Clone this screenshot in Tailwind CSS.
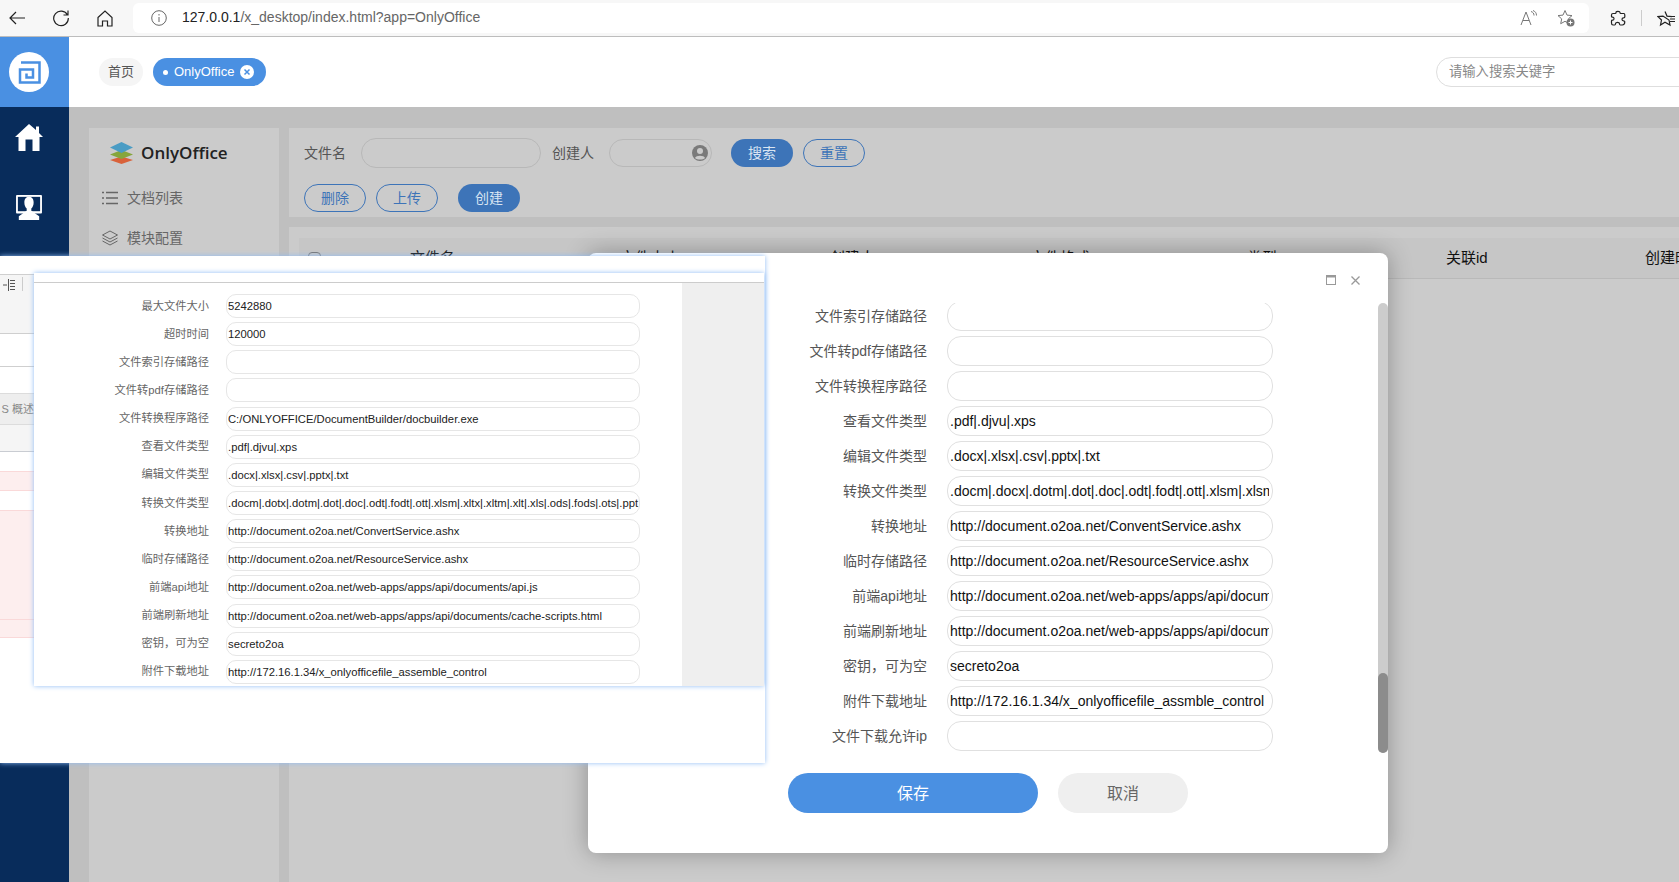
<!DOCTYPE html>
<html lang="zh-CN">
<head>
    <meta charset="UTF-8">
    <title>OnlyOffice</title>
    <script src="https://cdn.jsdelivr.net/npm/@tailwindcss/browser@4"></script>
</head>
<body class="font-['Liberation_Sans','Noto_Sans_CJK_SC',sans-serif]">
<div class="relative w-[1679px] h-[882px] overflow-hidden flex flex-col bg-white">

    <!-- Browser toolbar -->
    <div class="h-[37px] shrink-0 flex items-center bg-[#f7f7f7] border-b border-[#bdbdbd]">
        <svg class="w-[18px] h-[18px] ml-[8px]" viewBox="0 0 18 18" fill="none" stroke="#222" stroke-width="1.2"><path d="M17 9H2M8 3L2 9l6 6"/></svg>
        <svg class="w-[18px] h-[18px] ml-[26px]" viewBox="0 0 18 18" fill="none" stroke="#222" stroke-width="1.2"><path d="M15.5 6A7.3 7.3 0 1 0 16.3 9M16 1.5V6h-4.5"/></svg>
        <svg class="w-[16px] h-[17px] ml-[27px]" viewBox="0 0 16 17" fill="none" stroke="#222" stroke-width="1.2"><path d="M1 7.5L8 1l7 6.500V16h-4.500v-5h-5v5H1z"/></svg>
        <div class="ml-[20px] w-[1456px] h-[30px] bg-white rounded-md flex items-center">
            <svg class="w-[16px] h-[16px] ml-[18px]" viewBox="0 0 16 16" fill="none" stroke="#666" stroke-width="1"><circle cx="8" cy="8" r="7.300"/><path d="M8 7v5M8 4v1.500"/></svg>
            <span class="ml-[15px] -mt-[1px] text-[14px] text-[#666]"><span class="text-[#222]">127.0.0.1</span>/x_desktop/index.html?app=OnlyOffice</span>
            <svg class="w-[17px] h-[16px] ml-auto" viewBox="0 0 17 16" fill="none" stroke="#777" stroke-width="1"><path d="M1 15L6 2l5 13M3 10.500h6M11 1.500c2 .6 3 2 3 4M13 .5c2.200.8 3.500 2.500 3.500 5"/></svg>
            <svg class="w-[18px] h-[18px] ml-[20px] mr-[14px]" viewBox="0 0 18 18"><path d="M8 1.500l2 4.600 5 .5-3.700 3.300 1 4.800L8 12.300l-4.300 2.400 1-4.800L1 6.600l5-.5z" fill="none" stroke="#777"/><circle cx="13.500" cy="13.500" r="4" fill="#777"/><path d="M11.500 13.500h4M13.500 11.500v4" stroke="#fff"/></svg>
        </div>
        <svg class="w-[16px] h-[16px] ml-[21px] shrink-0" viewBox="0 0 16 16" fill="none" stroke="#222" stroke-width="1.200"><path d="M6 2.500C6 1 10 1 10 2.500c0 .8 0 1 .8 1h3c1 0 1 1 1 1.500v2c0 .8-.8.800-1.300.800-2 0-2 3 0 3 .5 0 1.300 0 1.300 1 0 1.500-1 3.200-2.500 3.200h-2c-.8 0-.8-.8-.8-1.200 0-1.800-4-1.800-4 0 0 .4 0 1.200-.8 1.200H3c-1 0-1.500-1-1.500-2v-2c0-.8.800-.8 1-.8 2 0 2-3 0-3-.2 0-1-.1-1-.8V5c0-1 .5-1.500 1.500-1.500h2.200c.8 0 .8-.3.800-1z"/></svg>
        <div class="w-px h-[16px] bg-[#ccc] ml-[15px] shrink-0"></div>
        <svg class="w-[19px] h-[17px] ml-[15px] shrink-0" viewBox="0 0 19 17" fill="none" stroke="#222" stroke-width="1.200"><path d="M8 1.500l2 4.600 5 .5M12 10l1 5-5-2.700-4.500 2.700 1-5L1 6.600l5-.5zM13 9h5M13 11.500h5M15 6.500h3"/></svg>
    </div>

    <div class="flex-1 flex min-h-0">
        <!-- Sidebar -->
        <div class="w-[69px] shrink-0 flex flex-col bg-[#082c5b]">
            <div class="h-[70px] bg-[#4a90e2] flex items-center pl-[9px]">
                <div class="w-[40px] h-[40px] rounded-full bg-white flex items-center justify-center">
                    <svg class="w-[23px] h-[23px]" viewBox="0 0 23 23" fill="none" stroke="#4a90e2" stroke-width="2.500"><path d="M3 1.500h18.500v20H2V8.500h13v8H8.500v-4"/></svg>
                </div>
            </div>
            <svg class="w-[28px] h-[27px] mt-[17px] ml-[15px]" viewBox="0 0 28 27" fill="#fff"><path d="M14 0L0 13h3.500v14h7V15.500h7V27h7V13H28l-4-4V2.500h-3V6z"/></svg>
            <svg class="w-[28px] h-[25px] mt-[44px] ml-[15px]" viewBox="0 0 28 27"><path d="M1 0h26a1 1 0 0 1 1 1v18a1 1 0 0 1-1 1H1a1 1 0 0 1-1-1V1a1 1 0 0 1 1-1z" fill="#fff"/><rect x="2" y="2" width="24" height="15.500" fill="#082c5b"/><path d="M14 2c-3.500 0-5 3-5 6s1 5 2.500 6.500v2.500L3 23v4h22v-4l-8.500-6v-2.500C18 13 19 11 19 8s-1.500-6-5-6z" fill="#fff"/></svg>
        </div>

        <div class="flex-1 flex flex-col min-w-0">
            <!-- Tabs and search -->
            <div class="h-[70px] shrink-0 flex items-center bg-white">
                <div class="ml-[30px] w-[44px] h-[28px] shrink-0 rounded-full bg-[#f5f5f5] flex items-center justify-center text-[13px] text-[#555]">首页</div>
                <div class="ml-[10px] w-[113px] h-[28px] shrink-0 rounded-full bg-[#4a90e2] flex items-center text-[13px] text-white">
                    <span class="ml-[10px] w-[5px] h-[5px] rounded-full bg-white"></span>
                    <span class="ml-[6px]">OnlyOffice</span>
                    <svg class="w-[14px] h-[14px] ml-[6px]" viewBox="0 0 14 14"><circle cx="7" cy="7" r="7" fill="#fff"/><path d="M4.500 4.500l5 5M9.500 4.500l-5 5" stroke="#4a90e2" stroke-width="1.500"/></svg>
                </div>
                <div class="ml-[1170px] w-[260px] h-[30px] shrink-0 rounded-l-full border border-[#dedede] flex items-center pl-[12px] text-[13.300px] text-[#888]">请输入搜索关键字</div>
            </div>

            <!-- Dimmed application body -->
            <div class="flex-1 flex bg-[#bfbfbf] pt-[21px] min-h-0">
                <div class="ml-[20px] w-[190px] shrink-0 bg-[#cbcbcb]">
                    <div class="flex items-center h-[50px] pl-[21px]">
                        <svg class="w-[23px] h-[22px]" viewBox="0 0 23 22"><path d="M11.500 14.500L23 18l-11.500 4L0 18z" fill="#d9623a"/><path d="M11.500 8L23 12.500 11.500 17 0 12.500z" fill="#86a63c"/><path d="M11.500 0L23 5.500 11.500 11 0 5.500z" fill="#4a9cc4"/></svg>
                        <span class="ml-[8px] font-['Open_Sans'] text-[17px] font-semibold text-[#222]">OnlyOffice</span>
                    </div>
                    <div class="flex items-center h-[20px] mt-[10px] pl-[13px] text-[14px] text-[#666]">
                        <svg class="w-[16px] h-[14px]" viewBox="0 0 16 14" stroke="#666" stroke-width="1.500"><path d="M0 1.500h2M4 1.500h12M0 7h2M4 7h12M0 12.500h2M4 12.500h12"/></svg>
                        <span class="ml-[9px]">文档列表</span>
                    </div>
                    <div class="flex items-center h-[20px] mt-[20px] pl-[13px] text-[14px] text-[#666]">
                        <svg class="w-[16px] h-[16px]" viewBox="0 0 16 16" fill="none" stroke="#666"><path d="M8 1l7.500 4L8 9 .5 5zM.5 8L8 12l7.500-4M.5 11L8 15l7.500-4"/></svg>
                        <span class="ml-[9px]">模块配置</span>
                    </div>
                </div>

                <div class="ml-[10px] flex-1 flex flex-col min-w-0">
                    <!-- Filter panel -->
                    <div class="h-[89px] shrink-0 bg-[#cbcbcb] pl-[15px] pt-[10px]">
                        <div class="flex items-center h-[30px] text-[14px] text-[#555]">
                            <span>文件名</span>
                            <div class="ml-[15px] w-[180px] h-[30px] rounded-full border border-[#b8b8b8]"></div>
                            <span class="ml-[11px]">创建人</span>
                            <div class="ml-[15px] w-[103px] h-[28px] rounded-full border border-[#b8b8b8] flex items-center justify-end pr-[3px]">
                                <svg class="w-[16px] h-[16px]" viewBox="0 0 16 16"><circle cx="8" cy="8" r="8" fill="#7a7a7a"/><circle cx="8" cy="6" r="3" fill="#cbcbcb"/><path d="M3 13c1-3 9-3 10 0-2 2-8 2-10 0z" fill="#cbcbcb"/></svg>
                            </div>
                            <div class="ml-[19px] w-[62px] h-[28px] rounded-full bg-[#3d74b8] flex items-center justify-center text-[#d8e4f2]">搜索</div>
                            <div class="ml-[10px] w-[62px] h-[28px] rounded-full border border-[#3d74b8] flex items-center justify-center text-[#3d74b8]">重置</div>
                        </div>
                        <div class="flex items-center h-[28px] mt-[16px] text-[14px]">
                            <div class="w-[62px] h-[28px] rounded-full border border-[#3d74b8] flex items-center justify-center text-[#3d74b8]">删除</div>
                            <div class="ml-[10px] w-[62px] h-[28px] rounded-full border border-[#3d74b8] flex items-center justify-center text-[#3d74b8]">上传</div>
                            <div class="ml-[20px] w-[62px] h-[28px] rounded-full bg-[#3d74b8] flex items-center justify-center text-[#d8e4f2]">创建</div>
                        </div>
                    </div>
                    <!-- Table -->
                    <div class="mt-[10px] flex-1 bg-[#cbcbcb] pt-[11px] pl-[10px]">
                        <div class="h-[41px] flex items-center bg-[#c6c6c6] border-b border-[#b9b9b9] text-[15px] text-[#111] whitespace-nowrap">
                            <div class="w-[111px] shrink-0 pl-[9px]"><div class="w-[13px] h-[13px] rounded-sm border border-[#777]"></div></div>
                            <div class="w-[210px] shrink-0">文件名</div>
                            <div class="w-[210px] shrink-0">文件大小</div>
                            <div class="w-[200px] shrink-0">创建人</div>
                            <div class="w-[217px] shrink-0">文件格式</div>
                            <div class="w-[199px] shrink-0">类型</div>
                            <div class="w-[199px] shrink-0">关联id</div>
                            <div class="w-[80px] shrink-0">创建时间</div>
                        </div>
                    </div>
                </div>
            </div>
        </div>
    </div>

    <!-- Settings dialog -->
    <div class="absolute left-[588px] top-[253px] w-[800px] h-[600px] rounded-lg bg-white shadow-[0_0_24px_rgba(0,0,0,0.3)] overflow-hidden">
        <div class="h-[50px] flex items-center justify-end pt-[4px] pr-[28px] gap-[15px]">
            <svg class="w-[10px] h-[10px]" viewBox="0 0 10 10" fill="none" stroke="#999"><rect x=".5" y=".5" width="9" height="9"/><path d="M0 1.500h10" stroke-width="2"/></svg>
            <svg class="w-[9px] h-[9px]" viewBox="0 0 9 9" stroke="#999" stroke-width="1.300"><path d="M.5.5l8 8M8.500.5l-8 8"/></svg>
        </div>
        <div class="relative h-[450px] overflow-hidden">
            <div class="-mt-[2px] flex flex-col gap-[5px] text-[14px]">
                <div class="flex items-center"><label class="w-[339px] text-right text-[#555]">文件索引存储路径</label><input class="ml-[20px] w-[326px] h-[30px] rounded-[14px] border border-[#e0e0e0] pl-[2px] pr-[3px] text-[#111]" value=""></div>
                <div class="flex items-center"><label class="w-[339px] text-right text-[#555]">文件转pdf存储路径</label><input class="ml-[20px] w-[326px] h-[30px] rounded-[14px] border border-[#e0e0e0] pl-[2px] pr-[3px] text-[#111]" value=""></div>
                <div class="flex items-center"><label class="w-[339px] text-right text-[#555]">文件转换程序路径</label><input class="ml-[20px] w-[326px] h-[30px] rounded-[14px] border border-[#e0e0e0] pl-[2px] pr-[3px] text-[#111]" value=""></div>
                <div class="flex items-center"><label class="w-[339px] text-right text-[#555]">查看文件类型</label><input class="ml-[20px] w-[326px] h-[30px] rounded-[14px] border border-[#e0e0e0] pl-[2px] pr-[3px] text-[#111]" value=".pdf|.djvu|.xps"></div>
                <div class="flex items-center"><label class="w-[339px] text-right text-[#555]">编辑文件类型</label><input class="ml-[20px] w-[326px] h-[30px] rounded-[14px] border border-[#e0e0e0] pl-[2px] pr-[3px] text-[#111]" value=".docx|.xlsx|.csv|.pptx|.txt"></div>
                <div class="flex items-center"><label class="w-[339px] text-right text-[#555]">转换文件类型</label><input class="ml-[20px] w-[326px] h-[30px] rounded-[14px] border border-[#e0e0e0] pl-[2px] pr-[3px] text-[#111]" value=".docm|.docx|.dotm|.dot|.doc|.odt|.fodt|.ott|.xlsm|.xlsm|.xltm"></div>
                <div class="flex items-center"><label class="w-[339px] text-right text-[#555]">转换地址</label><input class="ml-[20px] w-[326px] h-[30px] rounded-[14px] border border-[#e0e0e0] pl-[2px] pr-[3px] text-[#111]" value="http://document.o2oa.net/ConventService.ashx"></div>
                <div class="flex items-center"><label class="w-[339px] text-right text-[#555]">临时存储路径</label><input class="ml-[20px] w-[326px] h-[30px] rounded-[14px] border border-[#e0e0e0] pl-[2px] pr-[3px] text-[#111]" value="http://document.o2oa.net/ResourceService.ashx"></div>
                <div class="flex items-center"><label class="w-[339px] text-right text-[#555]">前端api地址</label><input class="ml-[20px] w-[326px] h-[30px] rounded-[14px] border border-[#e0e0e0] pl-[2px] pr-[3px] text-[#111]" value="http://document.o2oa.net/web-apps/apps/api/documents/api.js"></div>
                <div class="flex items-center"><label class="w-[339px] text-right text-[#555]">前端刷新地址</label><input class="ml-[20px] w-[326px] h-[30px] rounded-[14px] border border-[#e0e0e0] pl-[2px] pr-[3px] text-[#111]" value="http://document.o2oa.net/web-apps/apps/api/documents/cache-scripts.html"></div>
                <div class="flex items-center"><label class="w-[339px] text-right text-[#555]">密钥，可为空</label><input class="ml-[20px] w-[326px] h-[30px] rounded-[14px] border border-[#e0e0e0] pl-[2px] pr-[3px] text-[#111]" value="secreto2oa"></div>
                <div class="flex items-center"><label class="w-[339px] text-right text-[#555]">附件下载地址</label><input class="ml-[20px] w-[326px] h-[30px] rounded-[14px] border border-[#e0e0e0] pl-[2px] pr-[3px] text-[#111]" value="http://172.16.1.34/x_onlyofficefile_assmble_control"></div>
                <div class="flex items-center"><label class="w-[339px] text-right text-[#555]">文件下载允许ip</label><input class="ml-[20px] w-[326px] h-[30px] rounded-[14px] border border-[#e0e0e0] pl-[2px] pr-[3px] text-[#111]" value=""></div>
            </div>
            <!-- Scrollbar -->
            <div class="absolute right-0 top-0 bottom-0 w-[10px] rounded-full bg-[#cccccc]">
                <div class="absolute left-0 right-0 bottom-0 h-[80px] rounded-full bg-[#8c8c8c]"></div>
            </div>
        </div>
        <div class="flex mt-[20px] ml-[200px]">
            <div class="w-[250px] h-[40px] pt-[1px] rounded-full bg-[#4a90e2] flex items-center justify-center text-[16px] text-white">保存</div>
            <div class="ml-[20px] w-[130px] h-[40px] pt-[1px] rounded-full bg-[#efefef] flex items-center justify-center text-[16px] text-[#666]">取消</div>
        </div>
    </div>

    <!-- Pasted screenshot window -->
    <div class="absolute left-0 top-[256px] w-[765px] h-[507px] bg-white shadow-[0_0_5px_#8fbcf5]">
        <!-- Fragment of the page behind -->
        <div class="w-[34px] pt-[18px] overflow-hidden text-[#888]">
            <div class="h-[60px] bg-[#f5f5f5] border-y border-[#cfcfcf] pt-[2px] flex items-start text-[11px] text-[#555] pl-[3px]">
                <svg class="w-[12px] h-[12px] mt-[2px]" viewBox="0 0 12 12" stroke="#555"><path d="M0 6h4M5.500 0v12M7 1.500h5M7 4.500h5M7 7.500h5M7 10.500h5"/></svg>
                <div class="w-px h-[14px] ml-[7px] bg-[#ccc]"></div>
            </div>
            <div class="h-[33px] border-b border-[#cfcfcf]"></div>
            <div class="h-[27px] border-b border-[#dcdcdc]"></div>
            <div class="h-[31px] bg-[#eeeeee] border-b border-[#dcdcdc] flex items-center justify-end whitespace-nowrap text-[11px] text-[#888]">S 概述</div>
            <div class="h-[27px] bg-[#f5f5f5] border-b border-[#c9ccd2]"></div>
            <div class="h-[19px]"></div>
            <div class="h-[20px] bg-[#fdeeee] border-y border-[#fad9d9]"></div>
            <div class="h-[19px]"></div>
            <div class="h-[109px] bg-[#fdeeee] border-t border-[#fad9d9]"></div>
            <div class="h-[19px] bg-[#fdeeee] border-y border-[#fad9d9]"></div>
        </div>
        <div class="absolute left-[34px] top-[17px] w-[730px] h-[413px] bg-white shadow-[0_0_5px_#8fbcf5] flex flex-col">
            <div class="h-[10px] shrink-0 border-b border-[#cccccc]"></div>
            <div class="flex-1 flex min-h-0">
                <div class="flex-1 pt-[11px] flex flex-col gap-[4.150px] text-[11.250px] overflow-hidden">
                    <div class="flex items-center"><label class="w-[175px] text-right text-[#666]">最大文件大小</label><input class="ml-[17px] w-[414px] h-[24px] rounded-[10px] border border-[#e6e6e6] pl-[1px] text-[#222]" value="5242880"></div>
                    <div class="flex items-center"><label class="w-[175px] text-right text-[#666]">超时时间</label><input class="ml-[17px] w-[414px] h-[24px] rounded-[10px] border border-[#e6e6e6] pl-[1px] text-[#222]" value="120000"></div>
                    <div class="flex items-center"><label class="w-[175px] text-right text-[#666]">文件索引存储路径</label><input class="ml-[17px] w-[414px] h-[24px] rounded-[10px] border border-[#e6e6e6] pl-[1px] text-[#222]" value=""></div>
                    <div class="flex items-center"><label class="w-[175px] text-right text-[#666]">文件转pdf存储路径</label><input class="ml-[17px] w-[414px] h-[24px] rounded-[10px] border border-[#e6e6e6] pl-[1px] text-[#222]" value=""></div>
                    <div class="flex items-center"><label class="w-[175px] text-right text-[#666]">文件转换程序路径</label><input class="ml-[17px] w-[414px] h-[24px] rounded-[10px] border border-[#e6e6e6] pl-[1px] text-[#222]" value="C:/ONLYOFFICE/DocumentBuilder/docbuilder.exe"></div>
                    <div class="flex items-center"><label class="w-[175px] text-right text-[#666]">查看文件类型</label><input class="ml-[17px] w-[414px] h-[24px] rounded-[10px] border border-[#e6e6e6] pl-[1px] text-[#222]" value=".pdf|.djvu|.xps"></div>
                    <div class="flex items-center"><label class="w-[175px] text-right text-[#666]">编辑文件类型</label><input class="ml-[17px] w-[414px] h-[24px] rounded-[10px] border border-[#e6e6e6] pl-[1px] text-[#222]" value=".docx|.xlsx|.csv|.pptx|.txt"></div>
                    <div class="flex items-center"><label class="w-[175px] text-right text-[#666]">转换文件类型</label><input class="ml-[17px] w-[414px] h-[24px] rounded-[10px] border border-[#e6e6e6] pl-[1px] text-[#222]" value=".docm|.dotx|.dotm|.dot|.doc|.odt|.fodt|.ott|.xlsm|.xltx|.xltm|.xlt|.xls|.ods|.fods|.ots|.ppt"></div>
                    <div class="flex items-center"><label class="w-[175px] text-right text-[#666]">转换地址</label><input class="ml-[17px] w-[414px] h-[24px] rounded-[10px] border border-[#e6e6e6] pl-[1px] text-[#222]" value="http://document.o2oa.net/ConvertService.ashx"></div>
                    <div class="flex items-center"><label class="w-[175px] text-right text-[#666]">临时存储路径</label><input class="ml-[17px] w-[414px] h-[24px] rounded-[10px] border border-[#e6e6e6] pl-[1px] text-[#222]" value="http://document.o2oa.net/ResourceService.ashx"></div>
                    <div class="flex items-center"><label class="w-[175px] text-right text-[#666]">前端api地址</label><input class="ml-[17px] w-[414px] h-[24px] rounded-[10px] border border-[#e6e6e6] pl-[1px] text-[#222]" value="http://document.o2oa.net/web-apps/apps/api/documents/api.js"></div>
                    <div class="flex items-center"><label class="w-[175px] text-right text-[#666]">前端刷新地址</label><input class="ml-[17px] w-[414px] h-[24px] rounded-[10px] border border-[#e6e6e6] pl-[1px] text-[#222]" value="http://document.o2oa.net/web-apps/apps/api/documents/cache-scripts.html"></div>
                    <div class="flex items-center"><label class="w-[175px] text-right text-[#666]">密钥，可为空</label><input class="ml-[17px] w-[414px] h-[24px] rounded-[10px] border border-[#e6e6e6] pl-[1px] text-[#222]" value="secreto2oa"></div>
                    <div class="flex items-center"><label class="w-[175px] text-right text-[#666]">附件下载地址</label><input class="ml-[17px] w-[414px] h-[24px] rounded-[10px] border border-[#e6e6e6] pl-[1px] text-[#222]" value="http://172.16.1.34/x_onlyofficefile_assemble_control"></div>
                </div>
                <div class="w-[82px] shrink-0 bg-[#efefef]"></div>
            </div>
        </div>
    </div>

</div>
</body>
</html>
